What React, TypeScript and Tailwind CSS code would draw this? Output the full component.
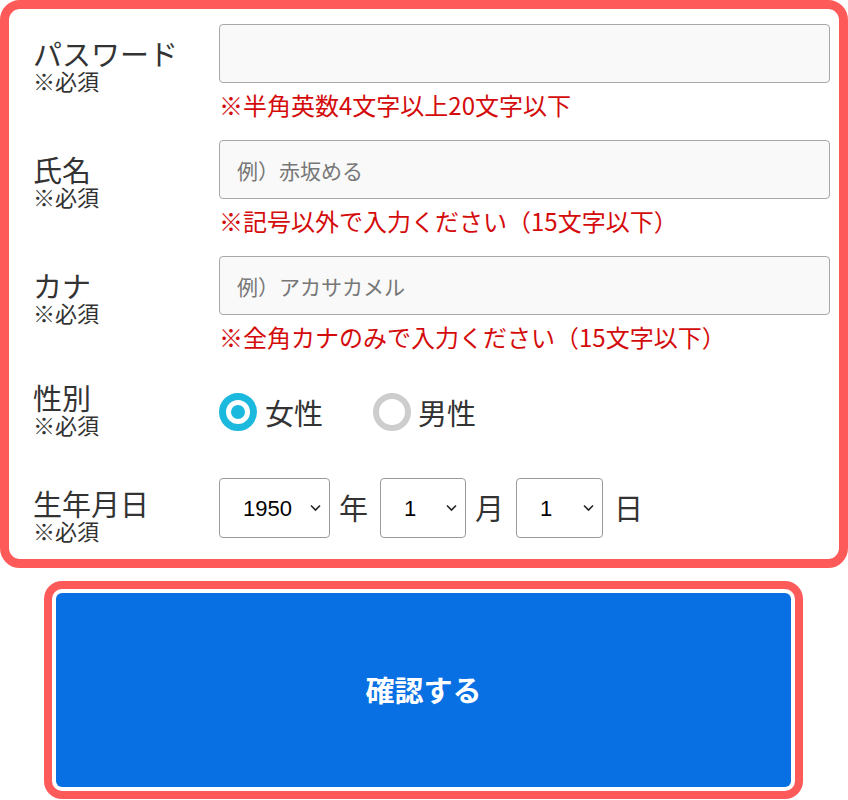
import React from 'react';

const Chevron = () => (
  <svg className="pointer-events-none absolute right-[9px] top-1/2 -translate-y-1/2" width="11" height="7" viewBox="0 0 11 7">
    <path d="M1 1l4.5 4.5L10 1" fill="none" stroke="#222" strokeWidth="1.6" />
  </svg>
);

function Label({ text }: { text: string }) {
  return (
    <div className="w-[186px] shrink-0 text-[#333]">
      <div className="text-[29px] leading-[32px]">{text}</div>
      <div className="text-[22px] leading-[22px]">※必須</div>
    </div>
  );
}

function TextRow({ label, placeholder, note }: { label: string; placeholder: string; note: string }) {
  return (
    <div className="flex">
      <div className="mt-[13px]">
        <Label text={label} />
      </div>
      <div className="flex-1">
        <input
          type="text"
          placeholder={placeholder}
          className="block w-full h-[59px] border border-[#a8a8a8] rounded-[4px] bg-[#f9f9f9] pl-[17px] text-[21px] text-[#333] placeholder:text-[#777] outline-none"
        />
        <p className="mt-[7px] text-[24px] leading-[30px] text-[#d40b0b]">{note}</p>
      </div>
    </div>
  );
}

function Select({ value, width }: { value: string; width: string }) {
  return (
    <div className={`relative ${width}`}>
      <select
        defaultValue={value}
        className="appearance-none block w-full h-[60px] border border-[#9a9a9a] rounded-[4px] bg-white pl-[23px] font-['Liberation_Sans',sans-serif] text-[22px] text-black outline-none"
      >
        <option value={value}>{value}</option>
      </select>
      <Chevron />
    </div>
  );
}

export default function App() {
  return (
    <div className="w-[848px] min-h-[800px] bg-white font-['Noto_Sans_CJK_JP',sans-serif]">
      {/* form panel */}
      <div className="h-[568px] border-[9px] border-[#ff5a5a] rounded-[20px] pl-[24px] pr-[9px] pt-[15px]">
        <div className="flex flex-col gap-[20px]">
          <TextRow label="パスワード" placeholder="" note="※半角英数4文字以上20文字以下" />
          <TextRow label="氏名" placeholder="例）赤坂める" note="※記号以外で入力ください（15文字以下）" />
          <TextRow label="カナ" placeholder="例）アカサカメル" note="※全角カナのみで入力ください（15文字以下）" />
        </div>

        <div className="flex mt-[29px]">
          <Label text="性別" />
          <div className="flex items-center mt-[8px] text-[29px] leading-[38px] text-[#333]">
            <span className="w-[38px] h-[38px] rounded-full border-[7px] border-[#1cb9de] flex items-center justify-center">
              <span className="w-[14px] h-[14px] rounded-full bg-[#1cb9de]" />
            </span>
            <span className="ml-[8px]">女性</span>
            <span className="ml-[50px] w-[38px] h-[38px] rounded-full border-[6px] border-[#cdcdcd]" />
            <span className="ml-[7px]">男性</span>
          </div>
        </div>

        <div className="flex mt-[40px]">
          <div className="mt-[12px]">
            <Label text="生年月日" />
          </div>
          <div className="flex items-center text-[29px] text-[#333]">
            <Select value="1950" width="w-[111px]" />
            <span className="ml-[9px] mr-[12px]">年</span>
            <Select value="1" width="w-[86px]" />
            <span className="ml-[9px] mr-[12px]">月</span>
            <Select value="1" width="w-[87px]" />
            <span className="ml-[11px]">日</span>
          </div>
        </div>
      </div>

      {/* submit */}
      <div className="ml-[44px] mt-[13px] w-[759px] h-[218px] border-[8px] border-[#ff5a5a] rounded-[18px] bg-white p-[4px]">
        <button className="w-full h-full rounded-[6px] bg-[#0870e2] text-white text-[29px] font-bold">
          確認する
        </button>
      </div>
    </div>
  );
}
